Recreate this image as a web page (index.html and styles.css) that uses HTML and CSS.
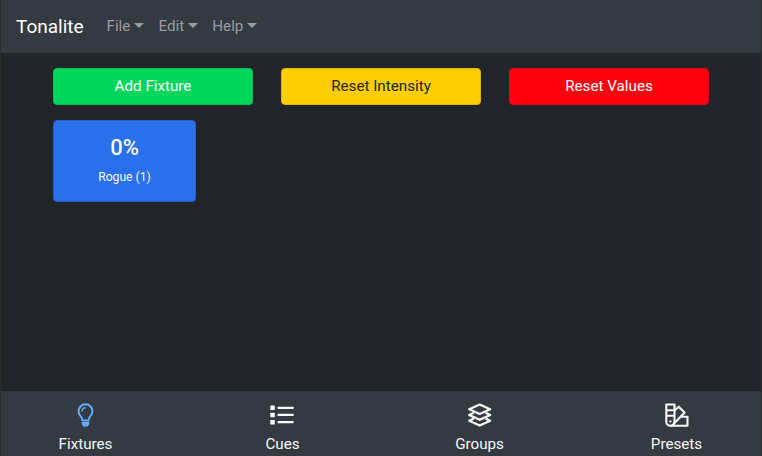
FILE: index.html
```
<!DOCTYPE html>
<html lang="en">
<head>
<meta charset="utf-8">
<title>Tonalite</title>
<link rel="stylesheet" href="styles.css">
</head>
<body>
<div class="app">
  <nav class="navbar">
    <span class="brand">Tonalite</span>
    <span class="menu">File</span>
    <span class="menu">Edit</span>
    <span class="menu">Help</span>
  </nav>
  <main class="content">
    <div class="actions">
      <button class="btn success">Add Fixture</button>
      <button class="btn warning">Reset Intensity</button>
      <button class="btn danger">Reset Values</button>
    </div>
    <div class="fixture">
      <div class="level">0%</div>
      <div class="name">Rogue (1)</div>
    </div>
  </main>
  <footer class="tabbar">
    <div class="tab active">
      <svg class="icon" viewBox="0 0 24 24" fill="none" stroke="currentColor" stroke-width="2">
        <path d="M8.600 17.400C8.500 15.200 7.200 13.900 6.100 12.500 5.200 11.300 4.600 9.900 4.600 8.200 4.600 4.300 7.700 1.300 11.500 1.300s6.900 3 6.900 6.900c0 1.700-.6 3.100-1.500 4.300-1.100 1.400-2.400 2.700-2.500 4.900z"/>
        <path d="M8 8.600C8 6.400 9.500 4.900 11.700 4.800" stroke-width="1.500"/>
        <path d="M7.700 18.900h7.600v2.200L13.700 23.400H9.300l-1.600-2.300z" fill="currentColor" stroke="none"/>
      </svg>
      <span>Fixtures</span>
    </div>
    <div class="tab">
      <svg class="icon list" viewBox="0 0 24 24" fill="currentColor">
        <rect x="0.300" y="2.500" width="4.500" height="4.500" rx=".6"/><rect x="0.300" y="9.700" width="4.500" height="4.500" rx=".6"/><rect x="0.300" y="17" width="4.500" height="4.500" rx=".6"/>
        <rect x="7.600" y="3.700" width="16" height="2.200" rx=".5"/><rect x="7.600" y="10.800" width="16" height="2.200" rx=".5"/><rect x="7.600" y="18.100" width="16" height="2.200" rx=".5"/>
      </svg>
      <span>Cues</span>
    </div>
    <div class="tab">
      <svg class="icon" viewBox="0 0 24 24" fill="none" stroke="currentColor" stroke-width="2.200" stroke-linejoin="round">
        <path d="M11.700 1.500 22.200 6.200 11.700 11 1.200 6.200z"/>
        <path d="M5.900 9.700 1.200 12 11.700 16.800l10.500-4.800-4.700-2.300"/>
        <path d="M5.900 15.400 1.200 17.700 11.700 22.600l10.500-4.900-4.700-2.300"/>
      </svg>
      <span>Groups</span>
    </div>
    <div class="tab">
      <svg class="icon" viewBox="0 0 24 24" fill="none" stroke="currentColor" stroke-width="2.100" stroke-linejoin="round">
        <path d="M1.300 1.500h8.200v17.200a4.100 4.100 0 0 1-8.200 0zM1.300 7.200h8.200M1.300 12.800h8.200"/>
        <path d="M9.500 7.600 13.700 3.700 19.600 9.500 8.300 21.400"/>
        <path d="M16.400 13.700h6.100v9H5.400"/>
        <circle cx="5.400" cy="18.400" r="1.150" fill="currentColor" stroke="none"/>
      </svg>
      <span>Presets</span>
    </div>
  </footer>
</div>
</body>
</html>
```
FILE: styles.css
```
* { box-sizing: border-box; }
body {
  margin: 0;
  background: #212529;
  color: #f8f9fa;
  font: 15.200px/23px Roboto, sans-serif;
}
.app {
  height: 456px;
  display: flex;
  flex-direction: column;
  border: solid #292d30;
  border-width: 0 1px;
  overflow: hidden;
}
.navbar {
  height: 53px;
  flex: none;
  display: flex;
  align-items: center;
  padding: 0 15px 1px;
  background: #333a41;
}
.brand { font-size: 19px; margin-right: 22.900px; color: #fff; }
.menu {
  display: flex;
  align-items: center;
  margin-right: 14.300px;
  color: #999ca0;
}
.menu::after {
  content: "";
  margin: -1px 0 0 3.800px;
  border: solid transparent;
  border-width: 5px 5px 0;
  border-top-color: #999ca0;
}
.content { flex: 1; padding: 15px 52px 0; }
.actions { display: grid; grid-template-columns: repeat(3, 200px); gap: 28px; }
.btn {
  height: 36.500px;
  padding: 1px 0 0;
  border: 1px solid;
  border-radius: 4px;
  font: inherit;
  color: #fff;
}
.success { background: #00d65b; border-color: #08bd55; }
.warning { background: #ffce00; border-color: #dfb508; color: #212529; }
.danger { background: #ff0010; border-color: #dc0719; }
.fixture {
  width: 143px;
  height: 82px;
  margin-top: 15px;
  padding-top: 13px;
  border: 1px solid #285fc2;
  border-radius: 4px;
  background: #2970eb;
  text-align: center;
}
.level { font-size: 22px; line-height: 28px; font-weight: 500; }
.name { margin-top: 6px; font-size: 12.160px; line-height: 18px; }
.tabbar {
  height: 65px;
  flex: none;
  display: grid;
  grid-template-columns: repeat(4, 197px);
  justify-content: center;
  padding-top: 12px;
  background: #333a41;
}
.tab { display: flex; flex-direction: column; align-items: center; }
.icon { width: 24px; height: 24px; margin-bottom: 6px; }
.list { margin-right: 1px; }
.active .icon { color: #63adfc; }
```
